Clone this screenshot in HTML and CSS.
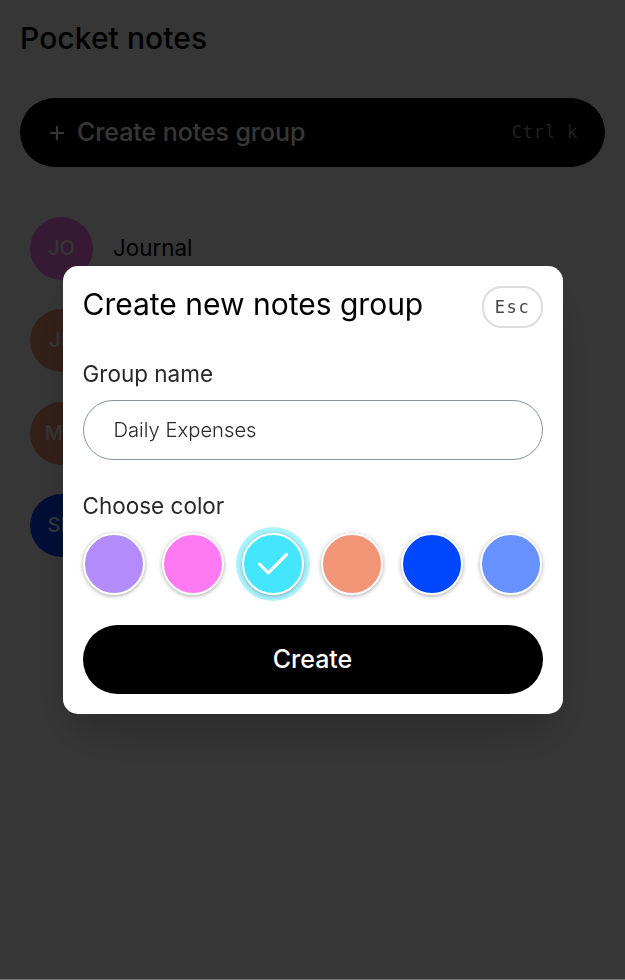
FILE: index.html
```html
<!DOCTYPE html>
<html lang="en">
<head>
<meta charset="utf-8">
<title>Pocket notes</title>
<link rel="stylesheet" href="styles.css">
</head>
<body>
<main class="page">
  <h1 class="page-title">Pocket notes</h1>
  <button class="new-group">
    <svg class="plus" viewBox="0 0 16 16"><path d="M8 1.9v12.2M1.9 8h12.2"/></svg>
    <span class="new-group-label">Create notes group</span>
    <kbd class="shortcut">Ctrl k</kbd>
  </button>
  <ul class="groups">
    <li class="group"><span class="avatar pink">JO</span><span class="group-name">Journal</span></li>
    <li class="group"><span class="avatar coral">JS</span></li>
    <li class="group"><span class="avatar coral">MN</span></li>
    <li class="group"><span class="avatar blue">SH</span></li>
  </ul>
</main>
<div class="overlay">
  <form class="modal">
    <header class="modal-header">
      <h2 class="modal-title">Create new notes group</h2>
      <button class="esc" type="button">Esc</button>
    </header>
    <label class="label" for="name">Group name</label>
    <input class="name-input" id="name" value="Daily Expenses">
    <div class="label color-label">Choose color</div>
    <div class="swatches">
      <span class="swatch violet"></span>
      <span class="swatch pink"></span>
      <span class="swatch cyan selected"><svg class="check" viewBox="0 0 32 24"><path d="M2.5 12.2l8.8 8.6L29.5 2.5"/></svg></span>
      <span class="swatch coral"></span>
      <span class="swatch blue"></span>
      <span class="swatch sky"></span>
    </div>
    <button class="create" type="button">Create</button>
  </form>
</div>
</body>
</html>
```
FILE: styles.css
```css
* { box-sizing: border-box; margin: 0; padding: 0; }
body { background: #fff; font-family: Inter, "Liberation Sans", sans-serif; color: #000; height: 980px; overflow: hidden; }
button { border: 0; font-family: inherit; }
.page { height: 980px; padding: 20px; border-bottom: 1px solid #777; }
.page-title { font-size: 30px; line-height: 36px; font-weight: 500; letter-spacing: .08px; }
.new-group { display: flex; align-items: center; width: 100%; height: 69px; margin-top: 42px; padding: 0 28px 0 29px; border-radius: 35px; background: #000; color: #fff; }
.plus { width: 16px; height: 16px; margin-right: 12px; fill: none; stroke: #fff; stroke-width: 2.2; stroke-linecap: round; }
.new-group-label { padding-bottom: 2px; font-size: 25px; font-weight: 500; letter-spacing: -.08px; }
.shortcut { margin-left: auto; padding-bottom: 1px; font: 17px "DejaVu Sans Mono", monospace; letter-spacing: .8px; margin-right: -1px; opacity: .6; }
.groups { display: flex; flex-direction: column; gap: 29.4px; padding: 50px 10px 0; list-style: none; }
.group { display: flex; align-items: center; gap: 20px; }
.group-name { padding-bottom: 2px; font-size: 22.4px; }
.avatar { display: flex; align-items: center; justify-content: center; width: 63px; height: 63px; padding-bottom: 1px; border-radius: 50%; color: #fff; font-size: 20px; font-weight: 500; }
.violet { background: #b38bfa; }
.pink { background: #ff79f2; }
.cyan { background: #43e6fc; }
.coral { background: #f19576; }
.blue { background: #0047ff; }
.sky { background: #6691ff; }
.overlay { position: fixed; inset: 0 0 1px; display: flex; align-items: flex-start; justify-content: center; padding-top: 266px; background: rgba(0, 0, 0, .79); }
.modal { display: flex; flex-direction: column; width: 500px; height: 448px; padding: 20px; border-radius: 15px; background: #fff; box-shadow: 0 25px 50px -12px rgba(0, 0, 0, .25); }
.modal-header { display: flex; justify-content: space-between; height: 42px; }
.modal-title { font-size: 30px; line-height: 37px; font-weight: 400; }
.esc { width: 61px; height: 42px; padding-left: 1px; border: 2px solid #dcdcdc; border-radius: 20px; background: #fff; color: #444; font: 17px "DejaVu Sans Mono", monospace; letter-spacing: 1.6px; }
.label { margin-top: 32px; font-size: 22.5px; line-height: 28px; color: #292929; }
.name-input { width: 100%; height: 60px; margin-top: 12px; padding: 0 30px 1px; border: 1px solid #869398; border-radius: 30px; background: #fff; color: #292929; font: 300 20.2px Inter, sans-serif; outline: 0; }
.color-label { margin-top: 32px; }
.swatches { display: flex; justify-content: space-between; margin-top: 13px; }
.swatch { display: flex; align-items: center; justify-content: center; width: 62px; height: 62px; border: 2px solid #fff; border-radius: 50%; box-shadow: 0 1px 4px rgba(0, 0, 0, .35); }
.selected { box-shadow: 0 1px 4px rgba(0, 0, 0, .3), 0 0 0 6px #aaf4fe; }
.check { width: 32px; height: 24px; fill: none; stroke: #fff; stroke-width: 3.2; stroke-linecap: round; stroke-linejoin: round; }
.create { height: 69px; margin-top: 30px; padding-bottom: 2px; border-radius: 35px; background: #000; color: #fff; font-size: 25px; font-weight: 500; }
```
